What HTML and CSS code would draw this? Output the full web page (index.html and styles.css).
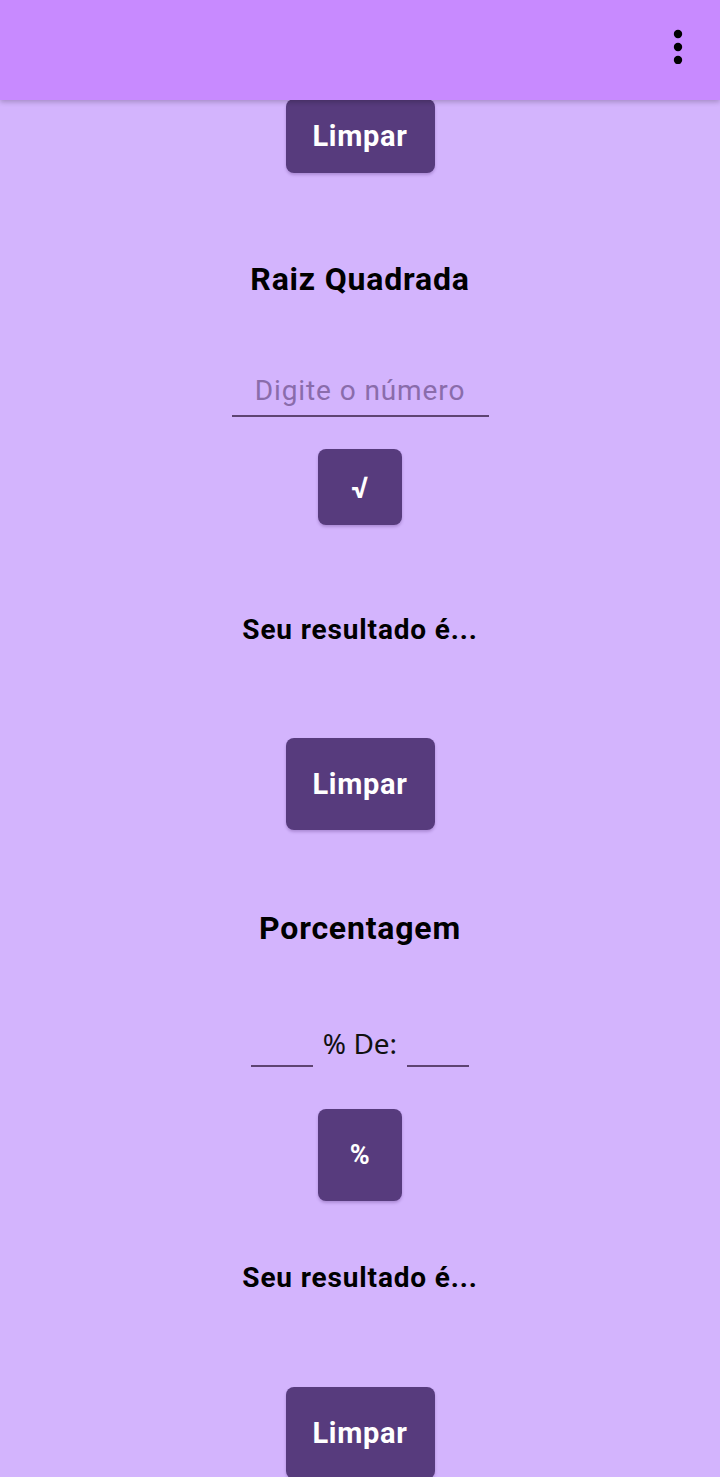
FILE: index.html
```html
<!DOCTYPE html>
<html lang="pt">
<head>
<meta charset="utf-8">
<title>Calculadora</title>
<link rel="stylesheet" href="styles.css">
</head>
<body>
<header class="appbar">
  <svg class="menu" width="12" height="36" viewBox="0 0 12 36" aria-hidden="true">
    <circle cx="6" cy="6" r="4.2" fill="#000"/>
    <circle cx="6" cy="19" r="4.2" fill="#000"/>
    <circle cx="6" cy="32" r="4.2" fill="#000"/>
  </svg>
</header>
<main class="content">
  <button class="btn btn-limpar first">Limpar</button>

  <h2 class="title t-raiz">Raiz Quadrada</h2>
  <div class="field"><span class="placeholder">Digite o número</span></div>
  <button class="btn btn-op btn-sqrt">√</button>
  <p class="result r1">Seu resultado é...</p>
  <button class="btn btn-limpar l2">Limpar</button>

  <h2 class="title t-porc">Porcentagem</h2>
  <div class="pct-row">
    <span class="mini-field"></span>
    <span class="pct-label">% De:</span>
    <span class="mini-field"></span>
  </div>
  <button class="btn btn-op btn-pct">%</button>
  <p class="result r2">Seu resultado é...</p>
  <button class="btn btn-limpar l3">Limpar</button>
</main>
</body>
</html>
```
FILE: styles.css
```css
html, body {
  margin: 0;
  padding: 0;
}
body {
  background: #d3b4fd;
  font-family: Roboto, "Noto Sans", sans-serif;
  height: 1477px;
  overflow: hidden;
}
.appbar {
  position: fixed;
  top: 0;
  left: 0;
  right: 0;
  height: 100px;
  background: #c88aff;
  box-shadow: 0 2px 5px rgba(0,0,0,0.22);
  z-index: 10;
  display: flex;
  justify-content: flex-end;
  align-items: flex-start;
}
.menu {
  margin-top: 28px;
  margin-right: 36px;
}
.content {
  display: flex;
  flex-direction: column;
  align-items: center;
  padding-top: 99px;
}
.btn {
  border: none;
  background: #573b7d;
  color: #fff;
  font-family: Roboto, sans-serif;
  font-weight: 700;
  border-radius: 8px;
  box-shadow: 0 2px 3px rgba(60,20,100,0.25);
  padding: 0;
  display: flex;
  align-items: center;
  justify-content: center;
  letter-spacing: 0.7px;
}
.btn-limpar {
  width: 149px;
  height: 92px;
  font-size: 29px;
}
.first { height: 74px; }
.l2 { margin-top: 92px; }
.l3 { margin-top: 93px; }
.title {
  margin: 0;
  font-size: 32px;
  line-height: 36px;
  font-weight: 700;
  color: #000;
  letter-spacing: 0.8px;
}
.t-raiz { margin-top: 88px; }
.t-porc { margin-top: 80px; }
.field {
  width: 257px;
  height: 48px;
  border-bottom: 2px solid #5e4472;
  margin-top: 70px;
  display: flex;
  align-items: center;
  justify-content: center;
}
.placeholder {
  font-size: 28px;
  color: #8a6cab;
  line-height: 52px;
  letter-spacing: 0.9px;
}
.btn-op {
  width: 84px;
}
.btn-sqrt {
  height: 76px;
  margin-top: 32px;
  font-size: 30px;
}
.btn-pct {
  height: 92px;
  margin-top: 42px;
  font-size: 27px;
}
.result {
  margin: 0;
  font-size: 28px;
  line-height: 32px;
  font-weight: 700;
  color: #000;
  letter-spacing: 0.85px;
}
.r1 { margin-top: 89px; }
.r2 { margin-top: 61px; }
.pct-row {
  margin-top: 81px;
  display: flex;
  align-items: flex-start;
  gap: 10px;
}
.mini-field {
  width: 62px;
  height: 38px;
  border-bottom: 2px solid #5e4472;
}
.pct-label {
  font-family: "Noto Sans", sans-serif;
  font-size: 28px;
  line-height: 32px;
  color: #111;
}
```
